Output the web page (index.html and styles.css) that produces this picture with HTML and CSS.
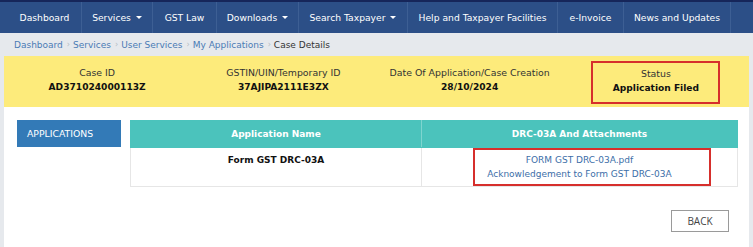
FILE: index.html
```html
<!DOCTYPE html>
<html>
<head>
<meta charset="utf-8">
<link rel="stylesheet" href="styles.css">
</head>
<body>
<div class="topline"></div>
<nav class="nav">
  <div class="nav-pad"></div>
  <a class="nav-item w1">Dashboard</a>
  <a class="nav-item w2">Services <span class="caret"></span></a>
  <a class="nav-item w3">GST Law</a>
  <a class="nav-item w4">Downloads <span class="caret"></span></a>
  <a class="nav-item w5">Search Taxpayer <span class="caret"></span></a>
  <a class="nav-item w6">Help and Taxpayer Facilities</a>
  <a class="nav-item w7">e-Invoice</a>
  <a class="nav-item w8">News and Updates</a>
</nav>
<div class="page">
  <div class="crumbs">
    <a>Dashboard</a><span class="sep">›</span><a>Services</a><span class="sep">›</span><a>User Services</a><span class="sep">›</span><a>My Applications</a><span class="sep">›</span><span class="cur">Case Details</span>
  </div>
  <div class="content">
    <div class="summary">
      <div class="field"><div class="lbl">Case ID</div><div class="val">AD371024000113Z</div></div>
      <div class="field"><div class="lbl">GSTIN/UIN/Temporary ID</div><div class="val">37AJIPA2111E3ZX</div></div>
      <div class="field"><div class="lbl">Date Of Application/Case Creation</div><div class="val">28/10/2024</div></div>
      <div class="field fstatus"><div class="status"><div class="lbl">Status</div><div class="val">Application Filed</div></div></div>
    </div>
    <div class="main">
      <div class="side"><div class="tab">APPLICATIONS</div></div>
      <table class="tbl">
        <thead><tr><th class="c1">Application Name</th><th>DRC-03A And Attachments</th></tr></thead>
        <tbody><tr><td class="c1 name">Form GST DRC-03A</td><td class="links"><div class="linkbox"><a>FORM GST DRC-03A.pdf</a><a>Acknowledgement to Form GST DRC-03A</a></div></td></tr></tbody>
      </table>
    </div>
    <div class="actions"><button class="back">BACK</button></div>
  </div>
</div>
</body>
</html>
```
FILE: styles.css
```css
* { box-sizing: border-box; }
html, body { margin: 0; padding: 0; }
body { width: 753px; height: 247px; overflow: hidden; background: #e6e9ed; font-family: Verdana, "DejaVu Sans", sans-serif; color: #212121; }
.topline { height: 2px; background: #16265a; }
.nav { height: 31px; background: #2c4f87; display: flex; align-items: stretch; }
.nav-pad { width: 8px; }
.nav-item { display: flex; align-items: center; justify-content: center; color: #fff; font-size: 9.2px; border-right: 1px solid #3d5f94; white-space: nowrap; }
.w1 { width: 74px; } .w2 { width: 71px; } .w3 { width: 64px; } .w4 { width: 82px; } .w5 { width: 109px; } .w6 { width: 150px; } .w7 { width: 66px; } .w8 { width: 107px; }
.caret { display: inline-block; margin-left: 5px; width: 0; height: 0; border-left: 3px solid transparent; border-right: 3px solid transparent; border-top: 3px solid #fff; vertical-align: middle; }
.page { padding: 0 4px; }
.crumbs { height: 23px; display: flex; align-items: center; padding-left: 10px; font-size: 9px; }
.crumbs a { color: #4a7bb5; }
.crumbs .sep { color: #b5bcc5; margin: 0 3px 0 4px; font-size: 8px; }
.crumbs .cur { color: #333; }
.content { background: #fff; height: 200px; }
.summary { background: #fdeb7b; height: 51px; display: grid; grid-template-columns: repeat(4, 1fr); }
.field { display: flex; flex-direction: column; align-items: center; justify-content: center; text-align: center; padding-bottom: 4px; }
.fstatus { padding-bottom: 0; }
.lbl { font-size: 9.4px; color: #333; line-height: 14px; }
.val { font-size: 9.1px; font-weight: bold; color: #111; line-height: 14px; }
.status { border: 2px solid #d62f2c; width: 129px; height: 43px; margin-top: 1px; display: flex; flex-direction: column; justify-content: center; align-items: center; padding-bottom: 3px; }
.main { display: flex; padding: 13px 11px 0 13px; gap: 9px; }
.side { width: 104px; flex: none; }
.tab { background: #337ab7; color: #fff; font-size: 9.3px; height: 27px; display: flex; align-items: center; padding-left: 10px; }
.tbl { flex: 1; border-collapse: collapse; font-size: 9px; }
.tbl th { background: #4bc3bc; color: #fff; font-weight: bold; height: 27px; padding: 0; border: 1px solid #4bc3bc; }
.tbl th.c1 { border-right: 1px solid #7fd5cf; width: 291px; }
.tbl td { border: 1px solid #e6e6e6; height: 38px; padding: 0; vertical-align: top; text-align: center; }
.tbl td.name { font-weight: bold; color: #111; padding-top: 7px; }
.linkbox { display: inline-flex; flex-direction: column; border: 2px solid #d62f2c; width: 238px; height: 38px; margin-left: 24px; padding-right: 24px; justify-content: center; line-height: 14px; }
.linkbox a { color: #3c6ea8; font-size: 9px; }
.actions { display: flex; justify-content: flex-end; padding: 23px 20px 0 0; }
.back { width: 58px; height: 22px; background: #fff; border: 1px solid #9a9a9a; font-family: "Open Sans", sans-serif; font-size: 10px; color: #444; padding: 0; border-radius: 0; }
```
